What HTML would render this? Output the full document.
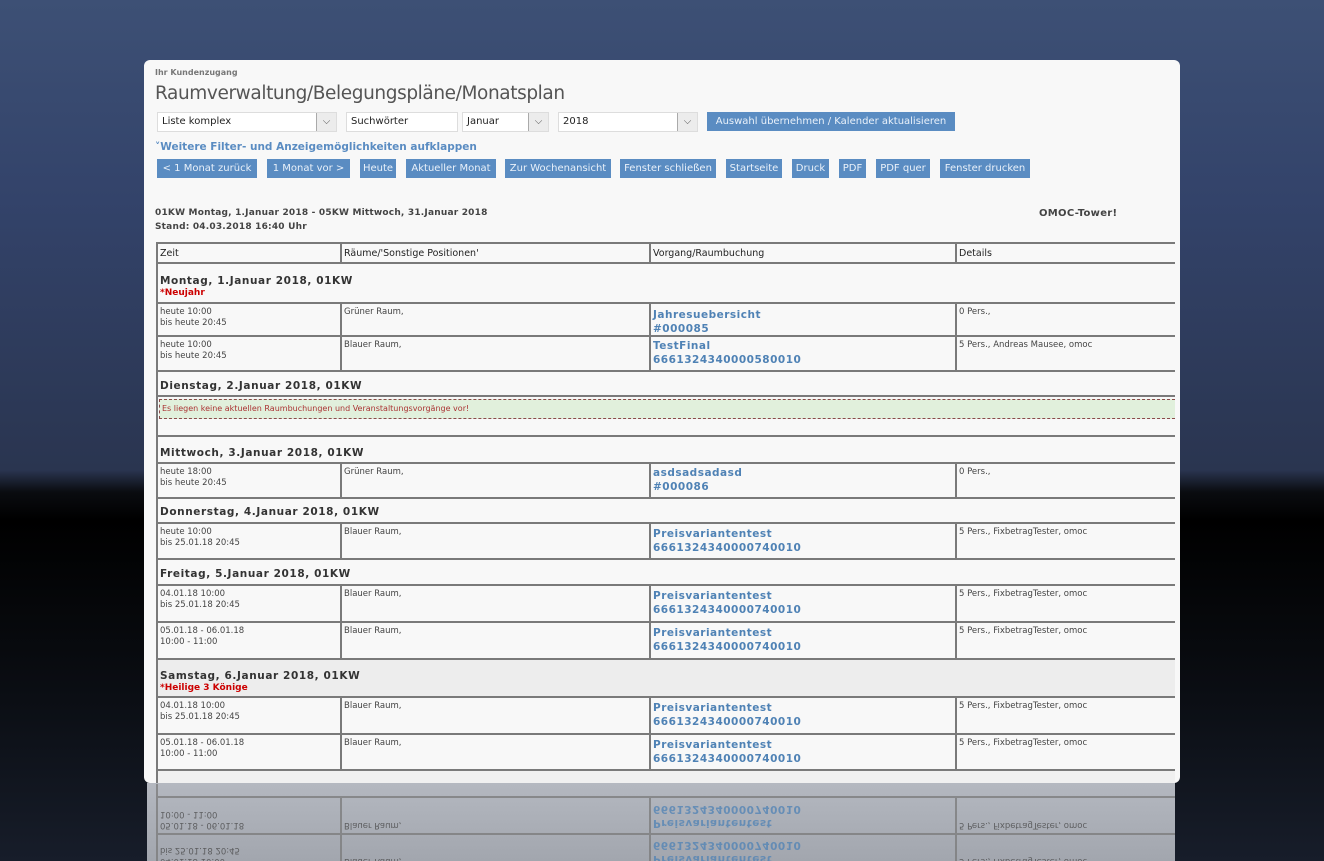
<!DOCTYPE html>
<html><head><meta charset="utf-8"><style>
*{margin:0;padding:0;box-sizing:border-box}
body{width:1324px;height:861px;overflow:hidden;position:relative;font-family:"DejaVu Sans","Liberation Sans",sans-serif;background:linear-gradient(#3d5075 0px,#33436a 200px,#2a3550 470px,#0a0c10 492px,#000 520px,#0b0e14 700px,#171d2a 861px)}
.abs{position:absolute}
#panel{left:144px;top:60px;width:1036px;height:723px;background:#f8f8f8;border-radius:6px;overflow:hidden}
.t{position:absolute;white-space:nowrap}
.sel{position:absolute;height:20px;background:#fff;border:1px solid #ddd;font-size:10px;color:#222;padding:3px 0 0 4px}
.arr{position:absolute;right:0;top:0;width:20px;height:18px;background:#ececec;border-left:1px solid #aaa;color:#555;font-size:10px;text-align:center;line-height:18px}
.btn{position:absolute;top:99px;height:19px;background:#5a8cc2;color:#e9f1fa;font-size:10px;line-height:19px;text-align:center;white-space:nowrap;overflow:hidden}
.row{position:absolute;left:12px;width:1019px;border-top:2px solid #7a7a7a;border-left:2px solid #7a7a7a}
.c{position:absolute;top:0;bottom:0;border-left:2px solid #7a7a7a}
.sm{font-size:8.5px;color:#444;line-height:11px;position:absolute;top:3px;left:2px;white-space:nowrap}
.lk{font-size:10.5px;font-weight:bold;color:#4f82b5;line-height:14px;position:absolute;top:2px;left:2px;white-space:nowrap;letter-spacing:0.5px}
.day{font-size:10.5px;font-weight:bold;color:#333;position:absolute;left:2px;white-space:nowrap;letter-spacing:0.6px}
.hol{font-size:9px;font-weight:bold;color:#c00;position:absolute;left:2px;white-space:nowrap}
#refl{left:147px;top:783px;width:1028px;height:78px;background:linear-gradient(#b4b8c0,#a2a6ae);overflow:hidden}
</style></head><body>
<div id="panel" class="abs">
 <div class="t" style="left:11px;top:8px;font-size:8px;font-weight:bold;color:#777">Ihr Kundenzugang</div>
 <div class="t" style="left:11px;top:23px;font-size:18.5px;color:#555;letter-spacing:-0.4px">Raumverwaltung/Belegungspläne/Monatsplan</div>
 <div class="sel" style="left:13px;top:52px;width:180px">Liste komplex<div class="arr">⌵</div></div>
 <div class="sel" style="left:202px;top:52px;width:112px">Suchwörter</div>
 <div class="sel" style="left:318px;top:52px;width:87px">Januar<div class="arr">⌵</div></div>
 <div class="sel" style="left:414px;top:52px;width:140px">2018<div class="arr">⌵</div></div>
 <div class="btn" style="left:563px;top:52px;width:248px">Auswahl übernehmen / Kalender aktualisieren</div>
 <div class="t" style="left:11px;top:81px;font-size:10.5px;font-weight:bold;color:#5a8cc2">˅Weitere Filter- und Anzeigemöglichkeiten aufklappen</div>
 <div class="btn" style="left:13px;width:100px">&lt; 1 Monat zurück</div>
 <div class="btn" style="left:123px;width:83px">1 Monat vor &gt;</div>
 <div class="btn" style="left:216px;width:36px">Heute</div>
 <div class="btn" style="left:262px;width:90px">Aktueller Monat</div>
 <div class="btn" style="left:361px;width:106px">Zur Wochenansicht</div>
 <div class="btn" style="left:476px;width:96px">Fenster schließen</div>
 <div class="btn" style="left:582px;width:56px">Startseite</div>
 <div class="btn" style="left:648px;width:37px">Druck</div>
 <div class="btn" style="left:695px;width:27px">PDF</div>
 <div class="btn" style="left:732px;width:54px">PDF quer</div>
 <div class="btn" style="left:796px;width:90px">Fenster drucken</div>
 <div class="t" style="left:11px;top:148px;font-size:9px;font-weight:bold;color:#444;letter-spacing:0.2px">01KW Montag, 1.Januar 2018 - 05KW Mittwoch, 31.Januar 2018</div>
 <div class="t" style="left:11px;top:162px;font-size:9px;font-weight:bold;color:#444;letter-spacing:0.2px">Stand: 04.03.2018 16:40 Uhr</div>
 <div class="t" style="left:895px;top:148px;font-size:10px;font-weight:bold;color:#444;letter-spacing:0.3px">OMOC-Tower!</div>

 <div class="row" style="top:182px;height:20px"><div class="sm" style="font-size:9.5px;color:#222;top:4px">Zeit</div><div class="c" style="left:182px"><div class="sm" style="font-size:9.5px;color:#222;top:4px">Räume/'Sonstige Positionen'</div></div><div class="c" style="left:491px"><div class="sm" style="font-size:9.5px;color:#222;top:4px">Vorgang/Raumbuchung</div></div><div class="c" style="left:797px"><div class="sm" style="font-size:9.5px;color:#222;top:4px">Details</div></div></div>
 <div class="row" style="top:202px;height:40px"><div class="day" style="top:11px">Montag, 1.Januar 2018, 01KW</div><div class="hol" style="top:24px">*Neujahr</div></div>
 <div class="row" style="top:242px;height:33px"><div class="sm">heute 10:00<br>bis heute 20:45</div><div class="c" style="left:182px"><div class="sm">Grüner Raum,</div></div><div class="c" style="left:491px"><div class="lk" style="top:4px">Jahresuebersicht<br>#000085</div></div><div class="c" style="left:797px"><div class="sm">0 Pers.,</div></div></div>
 <div class="row" style="top:275px;height:35px"><div class="sm">heute 10:00<br>bis heute 20:45</div><div class="c" style="left:182px"><div class="sm">Blauer Raum,</div></div><div class="c" style="left:491px"><div class="lk">TestFinal<br>6661324340000580010</div></div><div class="c" style="left:797px"><div class="sm">5 Pers., Andreas Mausee, omoc</div></div></div>
 <div class="row" style="top:310px;height:25px"><div class="day" style="top:8px">Dienstag, 2.Januar 2018, 01KW</div></div>
 <div class="row" style="top:335px;height:40px"><div class="abs" style="left:1px;top:2px;width:1016px;height:20px;background:#e1f0dc;border-top:1px dashed #8a4a4a;border-bottom:1px dashed #8a4a4a;border-left:1px dashed #8a4a4a;font-size:8px;color:#a33;padding:4px 2px">Es liegen keine aktuellen Raumbuchungen und Veranstaltungsvorgänge vor!</div></div>
 <div class="row" style="top:375px;height:27px"><div class="day" style="top:10px">Mittwoch, 3.Januar 2018, 01KW</div></div>
 <div class="row" style="top:402px;height:35px"><div class="sm">heute 18:00<br>bis heute 20:45</div><div class="c" style="left:182px"><div class="sm">Grüner Raum,</div></div><div class="c" style="left:491px"><div class="lk">asdsadsadasd<br>#000086</div></div><div class="c" style="left:797px"><div class="sm">0 Pers.,</div></div></div>
 <div class="row" style="top:437px;height:25px"><div class="day" style="top:7px">Donnerstag, 4.Januar 2018, 01KW</div></div>
 <div class="row" style="top:462px;height:36px"><div class="sm">heute 10:00<br>bis 25.01.18 20:45</div><div class="c" style="left:182px"><div class="sm">Blauer Raum,</div></div><div class="c" style="left:491px"><div class="lk" style="top:3px">Preisvariantentest<br>6661324340000740010</div></div><div class="c" style="left:797px"><div class="sm">5 Pers., FixbetragTester, omoc</div></div></div>
 <div class="row" style="top:498px;height:26px"><div class="day" style="top:8px">Freitag, 5.Januar 2018, 01KW</div></div>
 <div class="row" style="top:524px;height:37px"><div class="sm">04.01.18 10:00<br>bis 25.01.18 20:45</div><div class="c" style="left:182px"><div class="sm">Blauer Raum,</div></div><div class="c" style="left:491px"><div class="lk" style="top:3px">Preisvariantentest<br>6661324340000740010</div></div><div class="c" style="left:797px"><div class="sm">5 Pers., FixbetragTester, omoc</div></div></div>
 <div class="row" style="top:561px;height:37px"><div class="sm">05.01.18 - 06.01.18<br>10:00 - 11:00</div><div class="c" style="left:182px"><div class="sm">Blauer Raum,</div></div><div class="c" style="left:491px"><div class="lk" style="top:3px">Preisvariantentest<br>6661324340000740010</div></div><div class="c" style="left:797px"><div class="sm">5 Pers., FixbetragTester, omoc</div></div></div>
 <div class="row" style="top:598px;height:38px;background:#ededed"><div class="day" style="top:10px">Samstag, 6.Januar 2018, 01KW</div><div class="hol" style="top:23px">*Heilige 3 Könige</div></div>
 <div class="row" style="top:636px;height:37px"><div class="sm">04.01.18 10:00<br>bis 25.01.18 20:45</div><div class="c" style="left:182px"><div class="sm">Blauer Raum,</div></div><div class="c" style="left:491px"><div class="lk" style="top:3px">Preisvariantentest<br>6661324340000740010</div></div><div class="c" style="left:797px"><div class="sm">5 Pers., FixbetragTester, omoc</div></div></div>
 <div class="row" style="top:673px;height:36px"><div class="sm">05.01.18 - 06.01.18<br>10:00 - 11:00</div><div class="c" style="left:182px"><div class="sm">Blauer Raum,</div></div><div class="c" style="left:491px"><div class="lk" style="top:3px">Preisvariantentest<br>6661324340000740010</div></div><div class="c" style="left:797px"><div class="sm">5 Pers., FixbetragTester, omoc</div></div></div>
 <div class="row" style="top:709px;height:30px;background:#f0f0f0"></div>
</div>

<div id="refl" class="abs">
 <div style="position:absolute;left:0;top:0;width:1028px;height:110px;transform:scaleY(-1);transform-origin:0 44px;opacity:.75">
  <div class="row" style="left:9px;top:0;height:36px"><div class="sm">04.01.18 10:00<br>bis 25.01.18 20:45</div><div class="c" style="left:182px"><div class="sm">Blauer Raum,</div></div><div class="c" style="left:491px"><div class="lk" style="top:3px">Preisvariantentest<br>6661324340000740010</div></div><div class="c" style="left:797px"><div class="sm">5 Pers., FixbetragTester, omoc</div></div></div>
  <div class="row" style="left:9px;top:36px;height:37px"><div class="sm">05.01.18 - 06.01.18<br>10:00 - 11:00</div><div class="c" style="left:182px"><div class="sm">Blauer Raum,</div></div><div class="c" style="left:491px"><div class="lk" style="top:3px">Preisvariantentest<br>6661324340000740010</div></div><div class="c" style="left:797px"><div class="sm">5 Pers., FixbetragTester, omoc</div></div></div>
  <div class="row" style="left:9px;top:73px;height:14px"></div>
 </div>
</div>
</body></html>
